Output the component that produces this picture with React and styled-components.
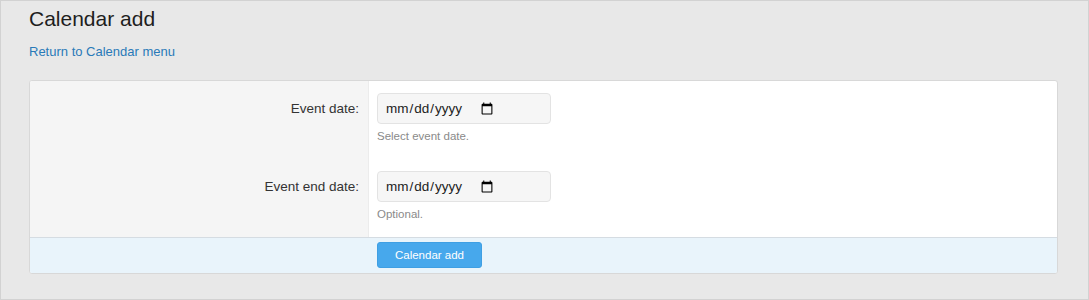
import React from "react";
import styled, { createGlobalStyle } from "styled-components";

const Global = createGlobalStyle`
  html, body { margin: 0; padding: 0; background: #e8e8e8; }
  body { font-family: "Liberation Sans", Arial, sans-serif; }
  * { box-sizing: border-box; }
`;

const Frame = styled.div`
  width: 1089px;
  height: 300px;
  border: 1px solid #d2d2d2;
  background: #e8e8e8;
  padding: 6px 30px 0 28px;
`;

const Title = styled.h1`
  margin: 0;
  font-size: 21px;
  line-height: 24px;
  font-weight: 400;
  color: #1e1e1e;
`;

const BackLink = styled.a`
  display: inline-block;
  margin-top: 13px;
  font-size: 13px;
  line-height: 16px;
  color: #2a7ab8;
  text-decoration: none;
`;

const Panel = styled.form`
  margin-top: 20px;
  background: #fff;
  border: 1px solid #d8d8d8;
  border-radius: 3px;
  overflow: hidden;
`;

const Row = styled.div`
  display: grid;
  grid-template-columns: 339px 1fr;
`;

const Label = styled.label`
  background: #f5f5f5;
  border-right: 1px solid #ececec;
  padding: 12px 9px 15px 10px;
  text-align: right;
  font-size: 13.5px;
  line-height: 31px;
  color: #333;
`;

const Field = styled.div`
  padding: 12px 10px 15px 8px;
  display: flex;
  flex-direction: column;
  align-items: flex-start;
`;

const DateInput = styled.input`
  width: 174px;
  height: 31px;
  padding: 0 7px;
  border: 1px solid #e3e3e3;
  border-radius: 4px;
  background: #f6f6f6;
  font-family: "Liberation Sans", Arial, sans-serif;
  font-size: 13.5px;
  color: #222;
  outline: none;

  &::-webkit-datetime-edit {
    flex: none;
  }
  &::-webkit-calendar-picker-indicator {
    margin-left: -4px;
  }
`;

const Explain = styled.div`
  margin-top: 5px;
  font-size: 11.5px;
  line-height: 15px;
  color: #8a8a8a;
`;

const Footer = styled.div`
  background: #e9f4fb;
  border-top: 1px solid #d5dce2;
  padding: 4px 0 5px 347px;
  display: flex;
`;

const SubmitButton = styled.button`
  width: 105px;
  height: 26px;
  border: 1px solid #3f9fe3;
  border-radius: 3px;
  background: #47a8ec;
  color: #fff;
  font-family: "Liberation Sans", Arial, sans-serif;
  font-size: 11.5px;
  cursor: pointer;
`;

const fields = [
  { id: "event_date", label: "Event date:", explain: "Select event date." },
  { id: "event_end_date", label: "Event end date:", explain: "Optional." },
];

export default function App() {
  return (
    <>
      <Global />
      <Frame>
        <Title>Calendar add</Title>
        <BackLink href="#">Return to Calendar menu</BackLink>
        <Panel onSubmit={(e) => e.preventDefault()}>
          {fields.map((f) => (
            <Row key={f.id}>
              <Label htmlFor={f.id}>{f.label}</Label>
              <Field>
                <DateInput id={f.id} type="date" />
                <Explain>{f.explain}</Explain>
              </Field>
            </Row>
          ))}
          <Footer>
            <SubmitButton type="submit">Calendar add</SubmitButton>
          </Footer>
        </Panel>
      </Frame>
    </>
  );
}
